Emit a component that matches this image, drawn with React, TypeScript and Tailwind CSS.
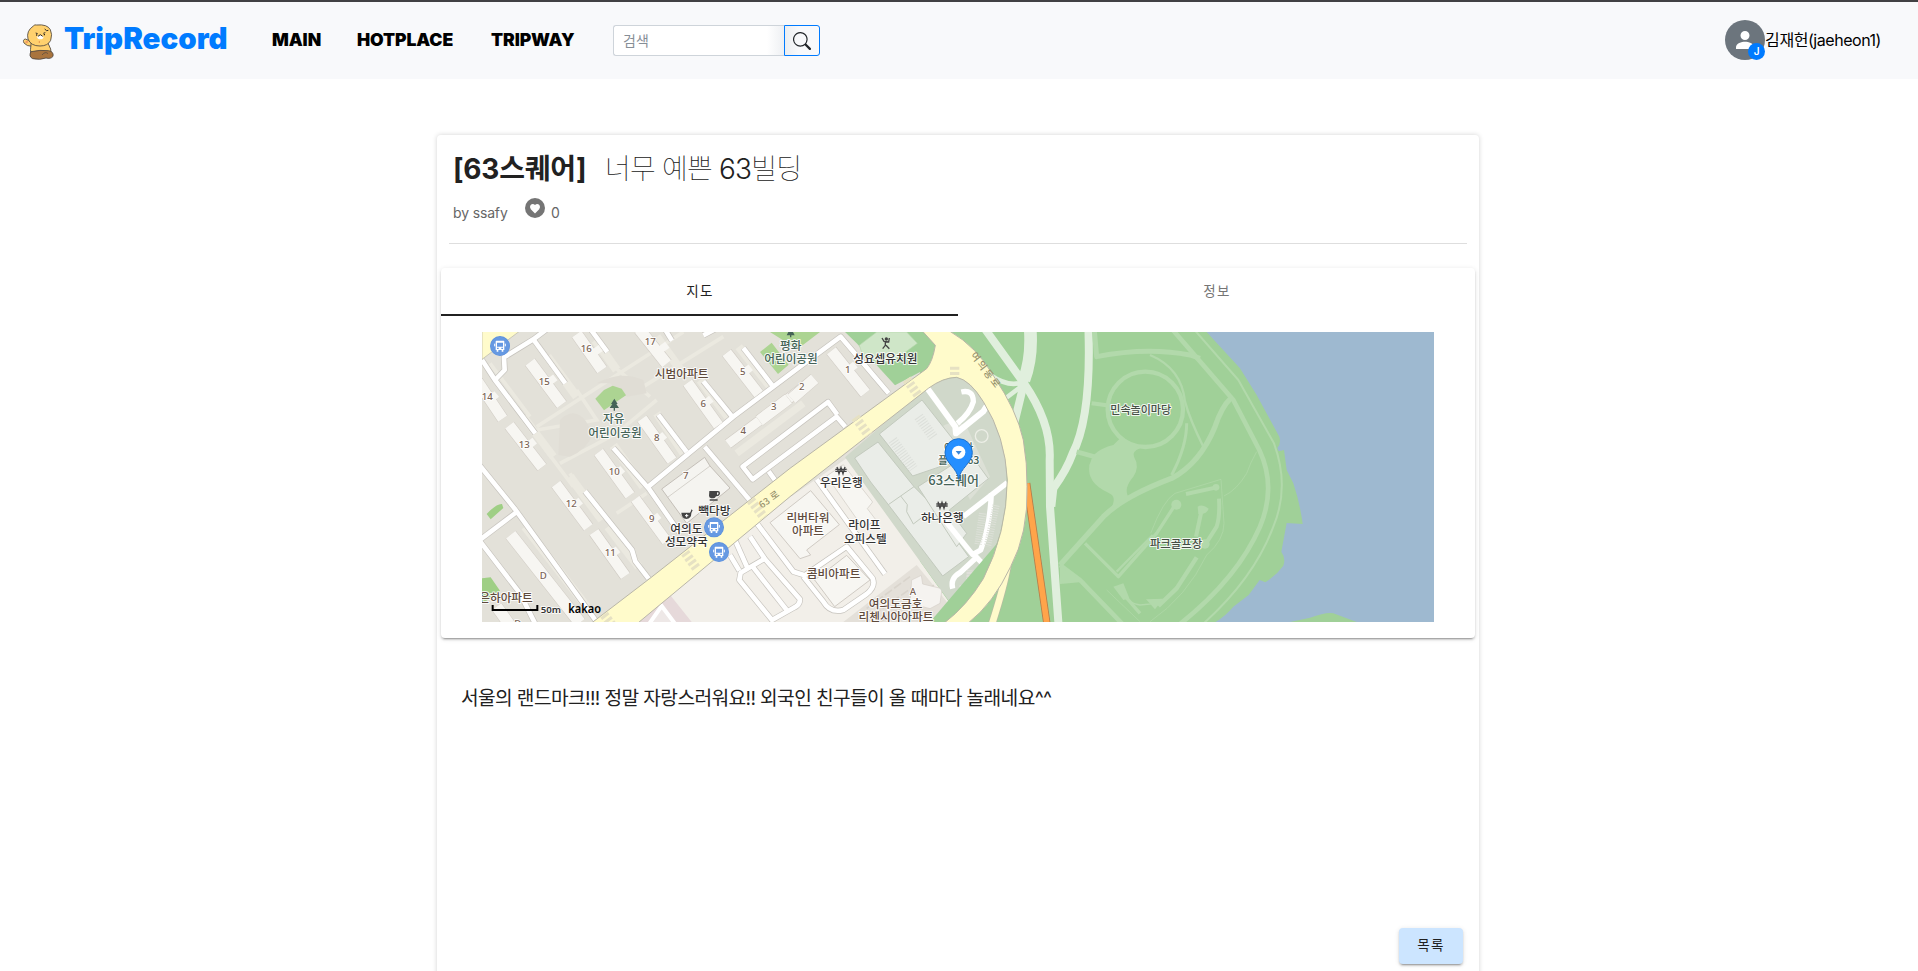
import React from 'react';

type Bar = [number, number, number, number, number];

const apartments: Bar[] = [
  [508, 28, 590, 131, 34],
  [320, 42, 396, 150, 34],
  [180, 126, 275, 254, 34],
  [20, 180, 98, 296, 32],
  [118, 316, 216, 442, 32],
  [770, 98, 866, 222, 32],
  [653, 188, 745, 316, 32],
  [516, 296, 606, 422, 32],
  [386, 396, 480, 526, 32],
  [496, 536, 590, 664, 30],
  [258, 492, 355, 622, 32],
  [372, 636, 466, 768, 32],
  [122, 644, 330, 908, 36],
  [80, 860, 130, 930, 34],
  [774, 372, 868, 302, 28],
  [868, 302, 956, 236, 34],
  [956, 236, 1020, 186, 30],
  [965, 236, 1034, 176, 34],
  [1084, 92, 1186, 220, 34],
];

const annexes: Bar[] = [
  [570, 90, 592, 74, 22],
  [372, 98, 392, 84, 22],
  [232, 190, 256, 172, 22],
  [60, 238, 80, 222, 22],
  [172, 380, 194, 362, 22],
  [822, 158, 842, 142, 22],
  [704, 252, 724, 236, 22],
  [564, 362, 584, 344, 22],
  [438, 464, 458, 446, 22],
  [548, 602, 568, 586, 20],
  [310, 560, 332, 542, 22],
  [424, 704, 444, 688, 22],
  [1136, 150, 1156, 134, 22],
];

const shadows: Bar[] = [
  [560, 50, 632, 150, 26],
  [376, 60, 440, 150, 26],
  [232, 110, 320, 230, 26],
  [160, 290, 250, 410, 24],
  [690, 180, 780, 300, 24],
  [560, 280, 640, 400, 24],
  [430, 376, 520, 500, 26],
  [300, 470, 396, 600, 26],
  [414, 620, 506, 740, 26],
  [806, 80, 900, 200, 24],
  [165, 620, 350, 860, 26],
  [800, 400, 1000, 250, 22],
];

const whiteRoads: string[] = [
  'M36 120 L75 180 L196 340',
  'M75 180 L104 150 L102 112 L190 58 L230 28',
  'M190 58 L286 190',
  'M362 28 L412 96',
  'M580 20 L606 62',
  'M700 46 L750 20',
  'M24 430 L134 566 L376 900',
  'M24 664 L140 576',
  'M30 664 L150 820 L200 920',
  'M345 514 L486 690 L496 724 L536 776',
  'M430 384 L538 508 L630 640',
  'M535 500 L790 290 L990 140 L1112 50 L1256 220',
  'M565 284 L650 396',
  'M700 184 L790 294',
  'M820 84 L908 198',
  'M704 380 L842 544',
  'M1102 284 L1074 246 L818 440 L848 478 L1100 290 L1126 320',
  'M896 454 L916 482',
];

const southRoads: string[] = [
  'M862 612 L970 755 L1004 766 L1130 680 L1208 775 Q1218 800 1190 822 L1120 870 Q1080 880 1060 845 L1000 770',
  'M1040 478 L1245 762',
  'M795 660 L835 750',
  'M780 705 L808 752',
  'M840 650 L884 716',
  'M812 758 L884 716 L990 838 Q990 856 970 864 L906 900 L808 780 Z',
  'M848 740 L950 870',
];

const parkRoads: { d: string; w: number }[] = [
  { d: 'M2100 20 L2290 240 L2368 390 Q2420 500 2370 620 Q2300 780 2120 920', w: 14 },
  { d: 'M2165 20 L2305 180 L2412 370 Q2460 500 2410 620 Q2350 780 2190 920', w: 6 },
  { d: 'M1872 20 L1880 110 Q2030 80 2160 105 L2190 115', w: 15 },
  { d: 'M2040 105 Q2135 145 2145 245 Q2160 300 2200 380', w: 7 },
  { d: 'M2150 310 Q2150 380 2105 465', w: 9 },
  { d: 'M2282 235 Q2255 260 2235 320 Q2190 430 2105 475 Q1960 530 1900 590 L1770 735', w: 16 },
  { d: 'M1865 250 L1910 256', w: 12 },
  { d: 'M1820 395 L1890 415', w: 14 },
  { d: 'M1845 670 L1945 770 L2060 640 L2115 555', w: 10 },
  { d: 'M1940 755 L2048 645', w: 7 },
  { d: 'M2148 522 L2240 502', w: 12 },
  { d: 'M2195 570 L2178 650', w: 12 },
  { d: 'M2247 536 Q2250 590 2240 620 L2208 670', w: 12 },
  { d: 'M2180 712 L2120 805 L2065 858', w: 13 },
  { d: 'M1935 800 Q1970 850 2010 855 L2060 850', w: 4 },
  { d: 'M1945 805 L2010 880', w: 10 },
  { d: 'M1770 735 L1830 780 L1965 920', w: 14 },
];

const hedges: string[] = [
  'M2042 640 Q2080 540 2115 520 L2253 478 L2262 610 Q2262 660 2210 705 Q2150 830 2040 905',
  'M2360 395 Q2340 430 2330 460 Q2300 510 2262 528',
  'M1910 810 L2010 905',
];

const crossings: string[] = ['M842 540 L882 592', 'M645 698 L680 746', 'M1310 178 L1346 228', 'M1156 292 L1196 346', 'M402 884 L430 920', 'M1454 140 L1454 166'];

const numbers: [string, number, number][] = [
  ['17', 541, 75], ['16', 349, 95], ['15', 223, 194], ['14', 52, 240], ['13', 163, 383],
  ['5', 818, 165], ['6', 700, 261], ['3', 911, 269], ['4', 820, 341], ['8', 560, 362],
  ['10', 433, 464], ['7', 647, 477], ['12', 304, 560], ['9', 545, 605], ['11', 421, 707],
  ['D', 220, 776], ['D', 143, 922], ['2', 995, 209], ['1', 1133, 158], ['A', 1329, 825],
];

const places: { t: string; x: number; y: number; c: string; s?: number }[] = [
  { t: '시범아파트', x: 635, y: 173, c: '#5f4a3c' },
  { t: '자유', x: 431, y: 308, c: '#456357' },
  { t: '어린이공원', x: 435, y: 350, c: '#456357' },
  { t: '평화', x: 962, y: 89, c: '#456357' },
  { t: '어린이공원', x: 963, y: 128, c: '#456357' },
  { t: '성요셉유치원', x: 1246, y: 128, c: '#333333' },
  { t: '빽다방', x: 733, y: 584, c: '#333333' },
  { t: '여의도', x: 649, y: 638, c: '#333333' },
  { t: '성모약국', x: 649, y: 678, c: '#333333' },
  { t: '은하아파트', x: 108, y: 845, c: '#5f4a3c' },
  { t: '우리은행', x: 1114, y: 501, c: '#333333' },
  { t: '리버타워', x: 1014, y: 606, c: '#5f4a3c' },
  { t: '아파트', x: 1014, y: 646, c: '#5f4a3c' },
  { t: '라이프', x: 1183, y: 628, c: '#333333' },
  { t: '오피스텔', x: 1186, y: 669, c: '#333333' },
  { t: '하나은행', x: 1417, y: 605, c: '#333333' },
  { t: '콤비아파트', x: 1091, y: 773, c: '#5f4a3c' },
  { t: '여의도금호', x: 1277, y: 863, c: '#5f4a3c' },
  { t: '리첸시아아파트', x: 1278, y: 904, c: '#5f4a3c' },
  { t: '아쿠아', x: 1466, y: 394, c: '#456357', s: 32 },
  { t: '플라넷63', x: 1466, y: 432, c: '#456357', s: 32 },
  { t: '63스퀘어', x: 1451, y: 495, c: '#456357', s: 39 },
  { t: '민속놀이마당', x: 2012, y: 281, c: '#454f45', s: 33 },
  { t: '파크골프장', x: 2118, y: 684, c: '#454f45', s: 34 },
];

function Strip({ bar, fill, edge }: { bar: Bar; fill: string; edge?: string }) {
  const [x1, y1, x2, y2, w] = bar;
  return (
    <>
      {edge && <line x1={x1} y1={y1} x2={x2} y2={y2} stroke={edge} strokeWidth={w + 3} />}
      <line x1={x1} y1={y1} x2={x2} y2={y2} stroke={fill} strokeWidth={w} />
    </>
  );
}

function Roads({ paths, w }: { paths: string[]; w: number }) {
  return (
    <g fill="none" strokeLinejoin="round">
      {paths.map((d) => <path key={'e' + d} d={d} stroke="#c6c3bd" strokeWidth={w + 4} />)}
      {paths.map((d) => <path key={d} d={d} stroke="#ffffff" strokeWidth={w} />)}
    </g>
  );
}

function BusStop({ x, y }: { x: number; y: number }) {
  return (
    <g transform={`translate(${x} ${y})`}>
      <circle r="30" fill="#5b90dc" />
      <circle r="28" fill="#6699e2" />
      <path fillRule="evenodd" fill="#fff" d="M-11 -16 H11 Q13 -16 13 -13 V12 H10 V17 H5 V12 H-5 V17 H-10 V12 H-13 V-13 Q-13 -16 -11 -16 Z M-9 -10 V2 H9 V-10 Z M-9 5 V9 H-4 V5 Z M4 5 V9 H9 V5 Z" />
      <path d="M-16 -7 V1 M16 -7 V1" stroke="#fff" strokeWidth="3" />
    </g>
  );
}

function MapView() {
  return (
    <svg viewBox="36 36 2856 870" className="block h-[290px] w-[952px]" preserveAspectRatio="none">
      <rect x="36" y="36" width="2856" height="870" fill="#9eb9d0" />
      <path d="M1300 0 L2174 0 L2210 36 L2310 145 L2360 225 L2428 350 Q2434 370 2422 384 L2426 394 L2442 390 L2450 450 L2470 490 Q2490 550 2498 612 L2450 609 L2434 695 Q2448 715 2440 737 Q2420 765 2386 787 L2369 780 L2336 825 L2290 860 Q2265 890 2230 910 L1300 910 Z" fill="#a0d098" />
      <path d="M2460 906 L2520 893 Q2570 875 2590 880 L2660 906 Z" fill="#a0d098" />

      <path d="M36 36 H1350 V906 H36 Z" fill="#e3e1d9" />
      <path d="M200 320 L640 36 M320 210 L380 300 L200 330 M220 380 L310 500 M270 430 L440 340 L560 240 M520 200 L760 50 M420 130 L540 230 M440 580 L530 520 M60 130 L180 290 M330 510 L300 460" stroke="#ebe9e0" strokeWidth="11" fill="none" />
      <path d="M270 300 Q310 260 345 300 L370 340 Q350 390 300 410 L265 405 Z M380 190 Q450 150 520 180 L530 220 L470 230 L420 190 Z" fill="#e0ddd5" />
      <g>{shadows.map((b, i) => <Strip key={i} bar={b} fill="#ebe9e0" />)}</g>
      <path d="M376 236 L402 210 L428 197 L455 206 L468 226 L402 271 Z" fill="#acd492" />
      <path d="M870 96 L905 68 L956 134 L924 162 Z M900 36 H1050 L982 88 Z" fill="#acd492" />
      <path d="M50 582 Q80 550 96 552 L100 564 L62 598 Z M36 775 L62 772 L90 812 L60 836 L36 850 Z" fill="#9fcf85" />

      <path d="M1125 36 H1396 L1380 140 L1275 196 L1160 70 Z" fill="#a0d098" />
      <path d="M1168 76 L1220 36 H1310 L1342 70 L1258 132 L1180 112 Z" fill="#cfe6c8" stroke="#b6d8ad" strokeWidth="2" />

      <Roads paths={whiteRoads} w={14} />
      <g>{apartments.map((b, i) => <Strip key={i} bar={b} fill="#f7f6f2" edge="#cfcac3" />)}</g>
      <g>{annexes.map((b, i) => <Strip key={i} bar={b} fill="#f7f6f2" />)}</g>
      <path d="M575 507 L704 412 L720 438 L780 504 L650 610 Z" fill="#f5f4f0" stroke="#c4bfb8" strokeWidth="3" />
      <path d="M593 532 L720 438" stroke="#c4bfb8" strokeWidth="2" />

      <path d="M470 906 L960 532 L1130 415 L1480 906 Z" fill="#f2efe9" />
      <path d="M505 906 L598 822 L665 906 Z" fill="#e6d9da" />
      <path d="M535 915 L575 858 L618 915" fill="#eee8e7" stroke="#fff" strokeWidth="12" />
      <path d="M1120 906 L1340 735 L1480 906 Z" fill="#e4e0d9" />
      <path d="M1190 865 L1320 770 M1210 885 L1330 800 M1230 906 L1400 790" stroke="#d9d4cc" strokeWidth="5" strokeDasharray="26 8" />
      <path d="M1325 780 L1354 766 L1358 792 L1416 806 L1410 850 L1380 866 L1320 850 Z" fill="#f5f3f0" stroke="#d4cec8" strokeWidth="2" />
      <Roads paths={southRoads} w={14} />
      <path d="M900 608 L1022 512 L1108 614 L1010 690 L1022 705 L990 716 Z" fill="#f7f6f2" stroke="#d0cbc4" strokeWidth="3" />
      <path d="M1034 780 L1130 706 L1200 780 L1094 860 Z" fill="#f7f6f2" stroke="#d0cbc4" strokeWidth="3" />
      <path d="M1070 468 L1120 434 L1208 546 L1192 566 L1218 600 L1180 625 Z" fill="#f7f6f2" stroke="#d0cbc4" strokeWidth="2" />

      <path d="M1125 412 L1370 200 Q1440 165 1490 175 Q1560 220 1600 380 Q1625 500 1590 640 Q1550 780 1450 862 Z" fill="#d0d8ca" />
      <path d="M1400 330 Q1450 290 1490 320 L1560 470 L1500 540 Z" fill="#dce0d6" />
      <g stroke="#c3cabe" strokeWidth="3" fill="#eaede8">
        <path d="M1154 414 L1224 366 L1332 500 L1372 540 L1496 710 L1418 768 L1255 554 L1202 486 Z" />
        <path d="M1228 342 L1356 240 L1460 372 L1410 440 L1328 468 Z" />
        <path d="M1344 500 L1500 400 L1555 476 L1438 570 L1490 640 L1460 680 Z" />
        <path d="M1255 554 L1332 500 M1292 528 L1312 554 L1310 575 L1330 612 L1372 580" fill="none" />
      </g>
      <path d="M1268 360 L1330 446 M1346 290 L1390 352" stroke="#dcdfda" strokeWidth="30" strokeDasharray="3 5" />
      <g fill="none" stroke="#ffffff" strokeLinejoin="round">
        <path d="M1372 205 L1456 320 L1458 340 L1540 274 L1550 258" strokeWidth="18" />
        <path d="M1474 216 Q1510 208 1510 245 Q1500 280 1462 310" strokeWidth="16" />
        <path d="M1480 590 L1612 488 M1564 520 Q1560 620 1532 690 L1508 704 L1412 585" strokeWidth="16" />
        <path d="M1448 806 Q1440 775 1470 758 L1520 712 L1550 744" strokeWidth="16" />
        <circle cx="1535" cy="348" r="19" stroke="#eceee6" strokeWidth="4" />
      </g>
      <path d="M1470 808 Q1505 800 1500 750" fill="none" stroke="#e0dfda" strokeWidth="22" strokeDasharray="8 2" />
      <path d="M1538 580 L1524 676 M1578 556 L1552 680" stroke="#dde0d8" strokeWidth="22" strokeDasharray="3 4" />

      <g fill="none" stroke="#e0efdd" strokeLinejoin="round">
        <path d="M1540 20 L1662 190 Q1745 310 1739 420 L1740 560 L1766 920" strokeWidth="24" />
        <path d="M1680 20 Q1688 110 1662 180" strokeWidth="38" />
        <path d="M1664 180 Q1650 240 1630 320" strokeWidth="24" />
        <path d="M1855 20 Q1865 290 1808 400 Q1790 450 1750 505 L1744 560" strokeWidth="24" />
        <path d="M1560 165 Q1620 205 1660 185 M1600 240 L1666 190" strokeWidth="14" />
      </g>
      <path d="M1590 660 L1620 735 L1600 800 L1560 906 H1380 Z" fill="#a0d098" />

      <path d="M1670 490 L1732 920" stroke="#b57d4b" strokeWidth="22" />
      <path d="M1670 490 L1732 920" stroke="#ffa44a" strokeWidth="17" />

      <path d="M1613 735 Q1602 800 1566 912" fill="none" stroke="#b7bca3" strokeWidth="24" />
      <path d="M1613 735 Q1602 800 1566 912" fill="none" stroke="#fffacb" strokeWidth="20" />
      <path d="M366 908 L540 775 L960 445 L1370 146 Q1388 124 1396 76 L1358 34 H1440 Q1520 80 1572 170 Q1640 270 1660 360 Q1672 430 1671 500 Q1675 640 1622 740 Q1570 850 1496 908 H1424 Q1490 858 1540 776 Q1610 640 1612 480 Q1606 350 1540 245 Q1500 180 1460 172 Q1420 172 1375 205 L960 530 L505 908 Z" fill="#fffbcb" stroke="#b9b6a8" strokeWidth="3" />
      <path d="M36 34 H148 L36 118 Z" fill="#fffbcb" stroke="#b9b6a8" strokeWidth="2" />
      <g stroke="#e6e1c3" strokeWidth="28" strokeDasharray="9 7">
        {crossings.map((d) => <path key={d} d={d} />)}
      </g>

      <g fill="none" stroke="#b2d9ab" strokeLinejoin="round">
        {parkRoads.map((r) => <path key={r.d} d={r.d} strokeWidth={r.w} />)}
        <circle cx="2026" cy="268" r="113" strokeWidth="13" />
        {hedges.map((d) => <path key={d} d={d} strokeWidth="2" />)}
      </g>
      <g fill="#b2d9ab">
        <path d="M1862 425 Q1870 390 1930 375 L1955 350 L2010 385 Q1985 395 1992 410 Q2010 440 1990 470 Q1960 505 1975 530 L1920 570 Q1945 530 1915 518 Q1850 490 1858 435 Z" />
        <circle cx="2119" cy="554" r="15" />
        <circle cx="2238" cy="502" r="10" />
        <path d="M2183 560 Q2195 550 2216 566 Q2210 584 2185 582 Z M2028 838 L2080 836 L2055 868 Z M1930 800 L1960 790 L1978 835 L1960 840 Z M1770 740 L1845 785 L1770 792 Z" />
        <circle cx="2205" cy="672" r="14" />
      </g>

      <g fontFamily='"Noto Sans","Noto Sans CJK KR",sans-serif' textAnchor="middle" fontWeight="500" strokeLinejoin="round">
        {numbers.map(([t, x, y], i) => (
          <text key={i} x={x} y={y} fontSize="29" fill="#7b6455" stroke="#fff" strokeWidth="5" paintOrder="stroke">{t}</text>
        ))}
      </g>
      <g fontFamily='"Noto Sans CJK KR",sans-serif' textAnchor="middle" fontWeight="500" strokeLinejoin="round">
        {places.map((p, i) => (
          <text key={i} x={p.x} y={p.y} fontSize={p.s ?? 35} fill={p.c} stroke="#fff" strokeOpacity=".85" strokeWidth="6" paintOrder="stroke">{p.t}</text>
        ))}
        <text transform="translate(903 546) rotate(-37)" fontSize="28" fill="#96916b" letterSpacing="1">63 로</text>
        <text transform="translate(1540 158) rotate(53)" fontSize="29" fill="#96916b" letterSpacing="6">여의동로</text>
      </g>

      <g fill="#456357">
        <path d="M433 236 L443 252 H439 L447 264 H419 L427 252 H423 Z M431 264 H435 V272 H431 Z" />
        <path d="M955 36 H969 L974 46 H950 Z M960 46 H964 V52 H960 Z" />
      </g>
      <g fill="#444">
        <path fillRule="evenodd" d="M718 513 H744 Q750 513 750 520 Q749 530 738 529 Q736 535 730 535 H724 Q717 534 717 527 Z M741 517 V525 Q746 524 746 518 Z M719 538 H743 V542 H719 Z" />
        <path d="M634 578 H660 Q666 568 663 567 L668 571 Q664 578 664 580 Q664 596 649 597 Q635 595 634 578 Z" />
        <path d="M645 587 H655 M650 582 V592" stroke="#fff" strokeWidth="3" />
        <circle cx="1249" cy="57" r="5" />
        <path d="M1236 54 L1242 64 L1256 66 L1258 54 M1246 64 V76 L1238 86 M1248 76 L1258 86" fill="none" stroke="#444" strokeWidth="4" />
      </g>
      {[[1113, 451], [1416, 555]].map(([x, y]) => (
        <path key={x} transform={`translate(${x} ${y})`} d="M-12 -10 L-6 10 L0 -8 L6 10 L12 -10 M-17 -3 H17 M-17 3 H17" fill="none" stroke="#444" strokeWidth="4" />
      ))}
      <BusStop x={90} y={78} />
      <BusStop x={732} y={622} />
      <BusStop x={747} y={696} />

      <path d="M1466 478 C1461 442 1425 430 1425 397 A41 41 0 0 1 1507 397 C1507 430 1471 442 1466 478 Z" fill="#258fff" stroke="#1b6fcb" strokeWidth="3" />
      <circle cx="1466" cy="397" r="20" fill="#fff" />
      <path d="M1457 393 H1475 L1466 404 Z" fill="#3a86d8" />

      <path d="M68 855 V870 H202 V855" fill="none" stroke="#000" strokeWidth="6" />
      <text x="212" y="879" fontFamily='"Noto Sans",sans-serif' fontSize="29" fontWeight="600" fill="#333" stroke="#fff" strokeWidth="4" paintOrder="stroke" textLength="61" lengthAdjust="spacingAndGlyphs">50m</text>
      <text x="295" y="879" fontFamily='"Noto Sans",sans-serif' fontSize="35" fontWeight="600" fill="#000" textLength="98" lengthAdjust="spacingAndGlyphs">kakao</text>
    </svg>
  );
}

function Mascot() {
  return (
    <svg viewBox="66 68 96 114" className="h-[38px] w-8">
      <path d="M96 138 Q80 138 72 128 Q67 118 76 116 Q86 118 94 128" fill="#ffd16e" stroke="#4a4440" strokeWidth="2.5" />
      <path d="M94 124 Q90 148 92 168 H154 Q156 146 142 124 Z" fill="#ffd16e" stroke="#4a4440" strokeWidth="2.5" />
      <path d="M93 154 Q120 148 146 151 Q162 154 159 168 Q152 177 138 173 Q120 180 98 175 Q85 168 93 154 Z" fill="#a9743d" stroke="#4a4440" strokeWidth="2.5" />
      <path d="M126 164 Q136 152 144 160" fill="none" stroke="#4a4440" strokeWidth="2" />
      <path d="M100 77 Q104 72 110 74 Q142 71 151 88 Q158 102 152 120 Q144 137 120 137 Q92 137 84 116 Q78 92 100 77 Z" fill="#ffd16e" stroke="#4a4440" strokeWidth="2.5" />
      <ellipse cx="121" cy="111" rx="9" ry="6" fill="#fff" />
      <path d="M107 98 L113 100 M130 99 L136 97 M114 108 L121 103 L128 108 M134 86 Q140 94 145 90" fill="none" stroke="#2d2926" strokeWidth="3" />
      <circle cx="110" cy="104" r="2" /><circle cx="133" cy="103" r="2" />
      <circle cx="80" cy="125" r="4" fill="#f29a64" />
      <circle cx="118" cy="125" r="2" fill="#df7a3d" />
    </svg>
  );
}

function Header() {
  return (
    <header className="flex h-[79px] items-center border-t-2 border-[#414144] bg-[#f8f9fb] pl-[22px] pr-[37px]">
      <div className="pt-0.5"><Mascot /></div>
      <div className="ml-[10px] w-[208px] pb-[3px] text-[29.5px] font-black leading-none">
        <span className="text-[#007bff]">TripRecord</span>
      </div>
      <nav className="flex pb-[2px] text-[17.6px] font-black leading-none tracking-[-0.1px] text-black">
        <a className="w-[85px]">MAIN</a>
        <a className="w-[134px]">HOTPLACE</a>
        <a className="w-[122px]">TRIPWAY</a>
      </nav>
      <div className="flex h-[31px]">
        <div className="flex w-[171px] items-center rounded-l-[3px] border border-r-0 border-[#ced4da] bg-linear-to-r from-white from-90% to-[#eef0f3] pl-[9px] text-[14px] text-[#868e96]">검색</div>
        <button className="flex w-9 items-center justify-center rounded-r-[3px] border border-[#007bff] bg-linear-to-r from-[#eceef0] to-[#f8f9fb] to-40%">
          <svg viewBox="0 0 16 16" className="size-[18px]" fill="#212529">
            <path d="M11.742 10.344a6.5 6.5 0 1 0-1.397 1.398h-.001c.03.04.062.078.098.115l3.85 3.85a1 1 0 0 0 1.415-1.414l-3.85-3.85a1.007 1.007 0 0 0-.115-.1zM12 6.5a5.5 5.5 0 1 1-11 0 5.5 5.5 0 0 1 11 0z" />
          </svg>
        </button>
      </div>
      <div className="ml-auto flex items-center pb-[2px]">
        <div className="relative size-10 rounded-full bg-[#6c757d]">
          <svg viewBox="0 0 16 16" className="absolute left-[11px] top-[11px] size-[18px]" fill="#fff">
            <path d="M8 8a4 4 0 1 0 0-8 4 4 0 0 0 0 8zM0 16v-1.5C0 11 5 9.6 8 9.6s8 1.4 8 4.9V16z" />
          </svg>
          <span className="absolute bottom-0 right-0 flex size-[17px] items-center justify-center rounded-full bg-[#007bff] text-[10px] font-semibold text-white">J</span>
        </div>
        <span className="whitespace-nowrap text-[16px] leading-none tracking-[-0.45px] text-black">김재헌(jaeheon1)</span>
      </div>
    </header>
  );
}

export default function App() {
  return (
    <div className="h-[971px] overflow-hidden bg-white font-['Inter','Noto_Sans_CJK_KR',sans-serif] text-[#212121]">
      <Header />
      <main className="ml-[437px] mt-14 flex h-[960px] w-[1042px] flex-col rounded-[4px] px-1 shadow-[0_0_5px_rgba(0,0,0,0.18)]">
        <div className="ml-2 mr-2 h-[109px] border-b border-[#dedede] pl-1">
          <h1 className="flex h-[67px] items-center whitespace-nowrap text-[28px] leading-none">
            <span className="w-[152px] font-bold tracking-[-0.2px]">[63스퀘어]</span>
            <span className="font-thin tracking-[-0.8px]">너무 예쁜 <span className="font-light">63</span>빌딩</span>
          </h1>
          <div className="-mt-0.5 flex h-6 items-center text-[14px] text-[#666]">
            <span className="w-[72px] tracking-[-0.15px]">by ssafy</span>
            <svg viewBox="0 0 20 20" className="-mt-2 mr-1.5 size-5">
              <circle cx="10" cy="10" r="10" fill="#757575" />
              <path d="M10 15.5 L5.8 11.2 Q4.2 9 5.6 7 Q7.8 4.8 10 7 Q12.2 4.8 14.4 7 Q15.8 9 14.2 11.2 Z" fill="#fff" />
            </svg>
            <span>0</span>
          </div>
        </div>
        <section className="mt-6 h-[370px] w-[1034px] shrink-0 rounded-[4px] bg-white shadow-[0_3px_1px_-2px_rgba(0,0,0,0.2),0_2px_2px_0_rgba(0,0,0,0.14),0_1px_5px_0_rgba(0,0,0,0.12)]">
          <div className="grid h-12 grid-cols-2 text-center text-[13.5px] leading-[47px] tracking-[1.25px]">
            <div className="h-12 border-b-2 border-[#212121] pl-px">지도</div>
            <div className="pl-px text-[#757575]">정보</div>
          </div>
          <div className="px-[41px] pt-4"><MapView /></div>
        </section>
        <p className="mt-[45px] whitespace-nowrap pl-[20px] text-[19.2px] leading-[30px] tracking-[-0.62px]">서울의 랜드마크!!! 정말 자랑스러워요!! 외국인 친구들이 올 때마다 놀래네요^^</p>
        <button className="ml-auto mr-3 mt-[215px] h-9 w-16 rounded-[4px] bg-[#cce5ff] pb-0.5 text-[13.5px] tracking-[1.25px] shadow-[0_3px_1px_-2px_rgba(0,0,0,0.2),0_2px_2px_0_rgba(0,0,0,0.14),0_1px_5px_0_rgba(0,0,0,0.12)]">목록</button>
      </main>
    </div>
  );
}
